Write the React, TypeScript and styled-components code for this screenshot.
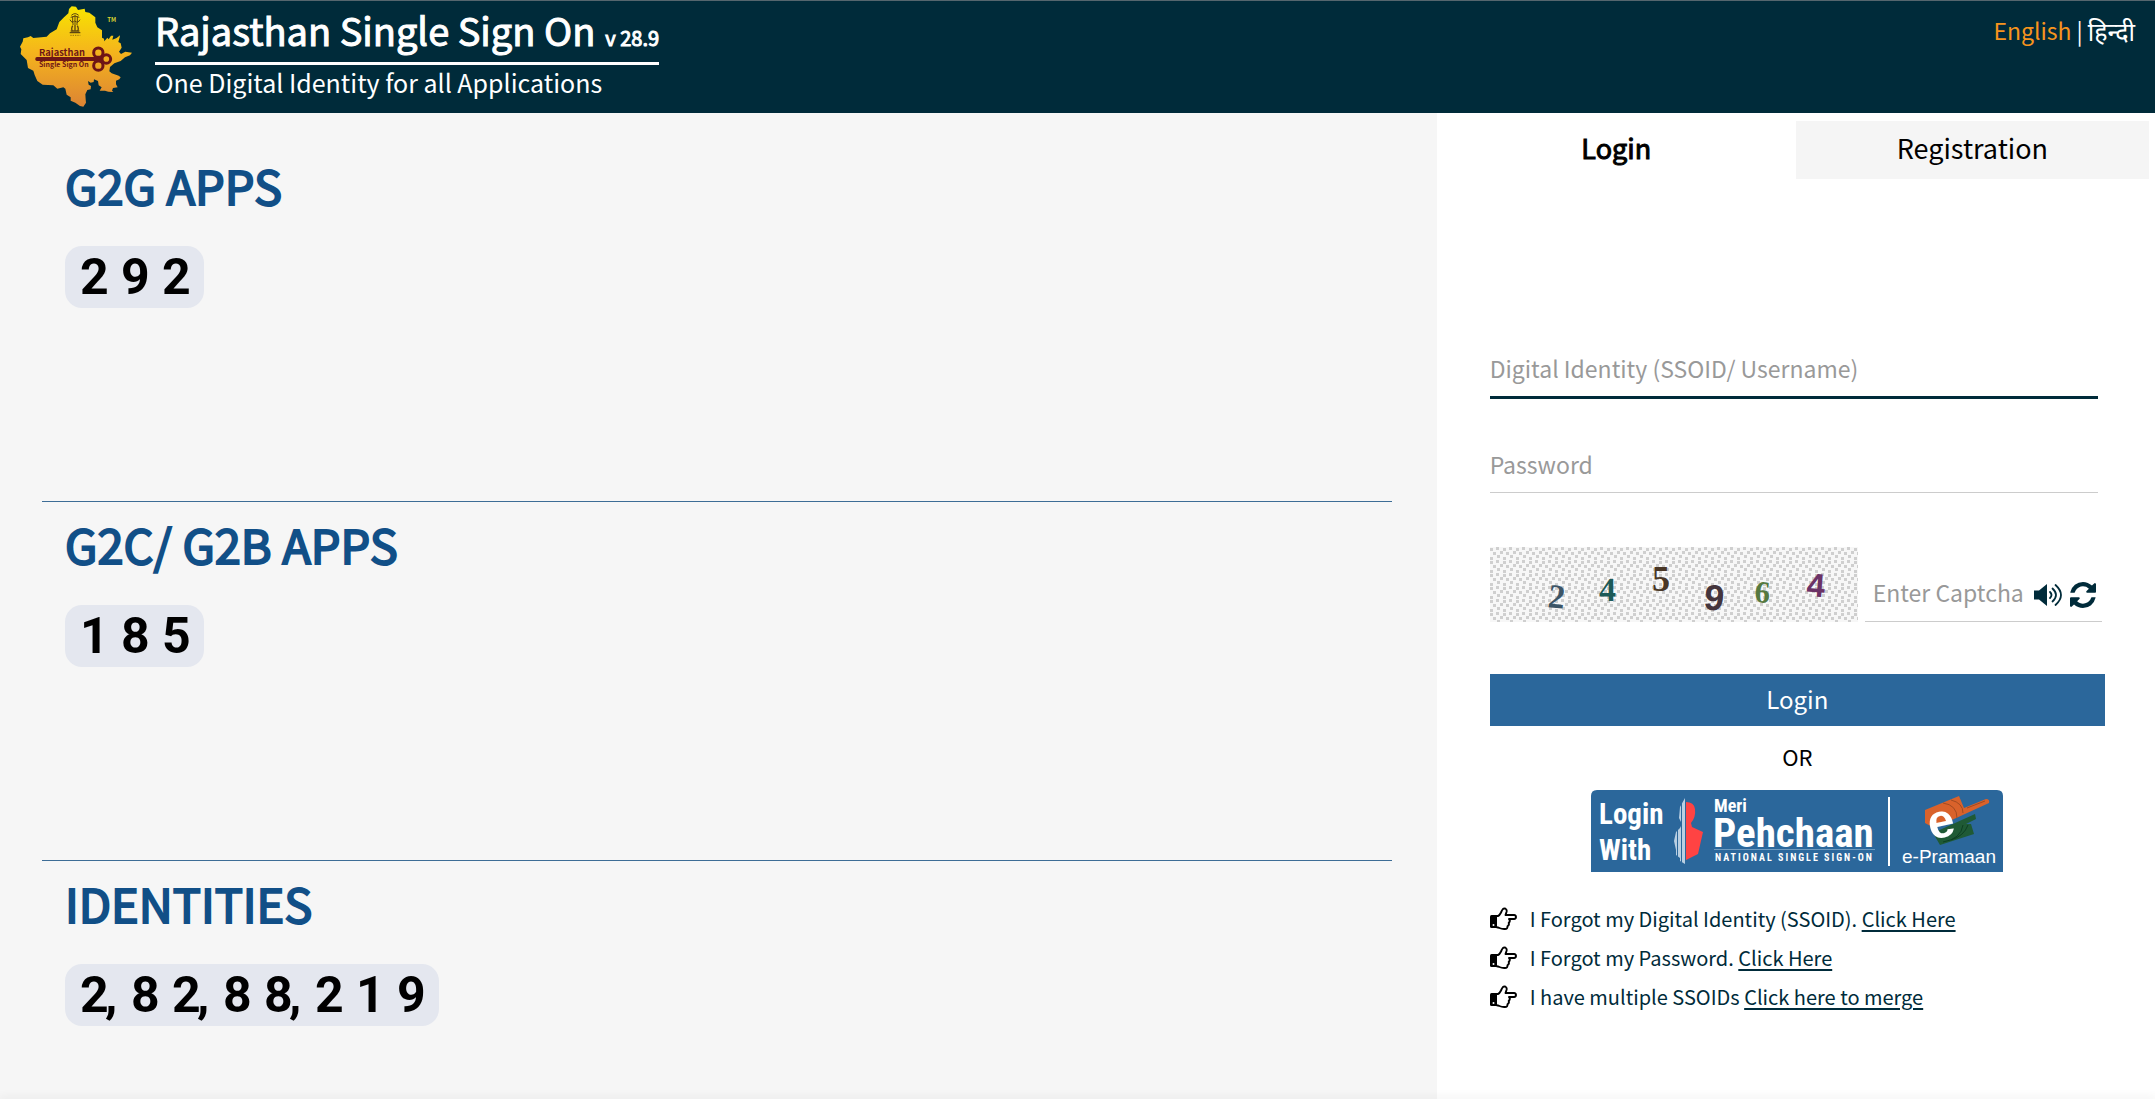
import React from "react";
import styled, { createGlobalStyle } from "styled-components";

const sans = `"Noto Sans CJK SC", "Noto Sans", sans-serif`;
const navy = "#002b3a";

const GlobalStyle = createGlobalStyle`
  *, *::before, *::after { box-sizing: border-box; }
  body { margin: 0; background: #fff; color: #000; font-family: ${sans}; }
  h1, h2, p, ul { margin: 0; padding: 0; font-weight: 400; }
  button, input { font-family: inherit; }
`;

const Page = styled.div`
  display: flex;
  flex-direction: column;
  min-height: 100vh;
`;

const Header = styled.header`
  display: flex;
  align-items: flex-start;
  gap: 20px;
  min-height: 113px;
  padding: 4px 20px 0 15px;
  background: ${navy};
  border-top: 1px solid #55666e;
  color: #fff;
`;

const Brand = styled.div`
  display: flex;
  flex-direction: column;
`;

const BrandTitle = styled.div`
  display: flex;
  align-items: baseline;
  gap: 10px;
  height: 60px;
  border-bottom: 3px solid #fff;
`;

const Title = styled.h1`
  font-size: 38px;
  line-height: 50px;
  -webkit-text-stroke: 1px currentColor;
`;

const Version = styled.span`
  font-size: 20px;
  line-height: 24px;
  -webkit-text-stroke: 1px currentColor;
`;

const Tagline = styled.p`
  font-size: 25px;
  line-height: 34px;
`;

const Languages = styled.nav`
  display: flex;
  gap: 5px;
  margin-left: auto;
  font-size: 23px;
  line-height: 50px;
`;

const Language = styled.a<{ $active?: boolean }>`
  color: ${(p) => (p.$active ? "#f7941d" : "#fff")};
  font-size: ${(p) => (p.$active ? 23 : 25)}px;
  text-decoration: none;
`;

const Main = styled.main`
  display: grid;
  grid-template-columns: 2fr 1fr;
  flex: 1;
`;

const Stats = styled.div`
  padding: 30px 45px 0 42px;
  background: #f6f6f6;
`;

const Stat = styled.section`
  min-height: 359px;
  padding: 12px 23px 0;
  border-bottom: 1px solid #3d6d96;

  &:last-child {
    min-height: 0;
    border-bottom: 0;
  }
`;

const StatTitle = styled.h2`
  margin-bottom: 31px;
  color: #114f87;
  font-size: 47px;
  line-height: 60px;
  -webkit-text-stroke: 2px currentColor;
`;

const Counter = styled.div`
  display: inline-flex;
  height: 62px;
  padding: 0 1px 0 15px;
  border-radius: 17px;
  background: #e4e7ef;
  font-family: Roboto, sans-serif;
  font-size: 50px;
  font-weight: 700;
  line-height: 62px;
`;

const Digit = styled.span<{ $beforeComma?: boolean }>`
  width: ${(p) => (p.$beforeComma ? 25 : 41)}px;
`;

const Comma = styled.span`
  width: 26px;
`;

const Panel = styled.div`
  background: #fff;
`;

const Tabs = styled.div`
  display: grid;
  grid-template-columns: 1fr 1fr;
  gap: 3px;
  padding: 8px 6px 0 3px;
`;

const Tab = styled.button<{ $active?: boolean }>`
  height: 58px;
  padding: 0 0 6px;
  border: 0;
  background: ${(p) => (p.$active ? "#fff" : "#f5f5f5")};
  color: #000;
  font-size: 27px;
  -webkit-text-stroke: ${(p) => (p.$active ? "1px currentColor" : "0")};
`;

const Form = styled.form`
  display: flex;
  flex-direction: column;
  padding: 167px 50px 0 53px;
`;

const Input = styled.input<{ $strong?: boolean }>`
  width: 100%;
  height: ${(p) => (p.$strong ? 53 : 51)}px;
  padding: 0 0 7px;
  border: 0;
  border-bottom: ${(p) => (p.$strong ? `3px solid ${navy}` : "1px solid #ccc")};
  outline: 0;
  background: transparent;
  color: #000;
  font-size: 23px;

  &::placeholder {
    color: #999;
    opacity: 1;
  }
`;

const Fields = styled.div`
  display: grid;
  gap: 43px;
  margin-right: 7px;
`;

const CaptchaRow = styled.div`
  display: flex;
  align-items: flex-end;
  gap: 7px;
  margin: 54px 3px 52px 0;
`;

const CaptchaEntry = styled.div`
  display: flex;
  flex: 1;
  align-items: center;
  gap: 7px;
  height: 51px;
  padding: 0 6px 2px 8px;
  border-bottom: 1px solid #ccc;
`;

const CaptchaInput = styled(Input)`
  flex: 1;
  width: 0;
  border-bottom: 0;
`;

const IconButton = styled.button`
  display: flex;
  padding: 0;
  border: 0;
  background: none;
  color: ${navy};
`;

const Submit = styled.button`
  height: 52px;
  padding: 0 0 4px;
  border: 0;
  background: #2b679b;
  color: #fff;
  font-size: 24px;
`;

const Or = styled.p`
  margin: 12px 0 16px;
  font-size: 22px;
  line-height: 36px;
  text-align: center;
`;

const BannerLink = styled.a`
  display: flex;
  align-self: center;
`;

const HelpList = styled.ul`
  margin-top: 27px;
  list-style: none;
`;

const HelpItem = styled.li`
  display: flex;
  align-items: center;
  gap: 12px;
  color: ${navy};
  font-size: 20px;
  line-height: 39px;
`;

const HelpLink = styled.a`
  color: inherit;
  text-underline-offset: 3px;
`;

const Footer = styled.footer`
  height: 0;
  box-shadow: 0 0 8px 1px rgba(0, 0, 0, 0.14);
`;

const Logo = () => (
  <svg width="120" height="106" viewBox="45 15 360 318" role="img" aria-label="Rajasthan Single Sign On">
    <defs>
      <linearGradient id="land" x1="0" y1="0" x2="0" y2="1">
        <stop offset="0" stopColor="#f7e400" />
        <stop offset="0.45" stopColor="#f5b51c" />
        <stop offset="1" stopColor="#dc8434" />
      </linearGradient>
    </defs>
    <path
      fill="url(#land)"
      d="M207 27L215 19 228 20 234 30 254 26 256 36 268 38 281 48 286 52 286 68 292 82 306 91 306 113 312 116 313 124 322 113 326 118 333 107 340 107 337 119 350 114 360 106 359 112 355 126 362 130 365 143 357 155 363 162 376 155 396 158 390 166 375 172 362 183 343 190 330 201 328 214 335 220 356 227 362 232 358 238 348 242 348 253 353 262 339 264 336 272 340 276 325 275 315 272 299 272 305 262 296 256 294 243 282 238 281 246 272 248 264 243 266 254 273 258 272 268 262 270 256 283 257 298 258 308 250 320 240 318 226 308 212 302 212 292 200 284 196 266 190 262 172 266 160 256 128 254 112 243 104 225 100 212 84 204 80 180 62 162 64 148 60 140 68 125 70 115 84 112 92 108 100 114 140 110 150 100 170 88 178 66 192 52 205 40z"
    />
    <g fill="none" stroke="#5f4710">
      <path strokeWidth="3" d="M214 46q11-10 22 0M212 52q13-7 26 0M210 59q5 12 14 4 10 8 16-4M218 49v20M225 45v24M232 49v20M216 72h18" />
      <path strokeWidth="4" d="M218 77q-6 12 0 15M232 77q6 12 0 15M225 75v17" />
      <path strokeWidth="4" d="M209 98h32M212 93h26" />
      <path strokeWidth="2" strokeDasharray="4 3" d="M211 106h30" />
    </g>
    <g fill="#6e1616" fontFamily="Noto Sans CJK SC, sans-serif">
      <text x="117" y="167" fontSize="28" fontWeight="700">Rajasthan</text>
      <text x="117" y="201" fontSize="21" fontWeight="700">Single Sign On</text>
      <rect x="106" y="171" width="184" height="12" rx="5" />
    </g>
    <g fill="none" stroke="#6e1616" strokeWidth="9">
      <circle cx="295" cy="158" r="14" />
      <circle cx="295" cy="197" r="14" />
      <circle cx="319" cy="177" r="13" />
      <path d="M282 177h22" />
    </g>
    <text x="322" y="67" fill="#d9d230" fontFamily="Noto Sans CJK SC, sans-serif" fontSize="18" fontWeight="700">TM</text>
  </svg>
);

const captchaGlyphs = [
  { char: "2", x: 57, y: 60, size: 34, fill: "#3d5566", serif: true, turn: 6 },
  { char: "4", x: 109, y: 54, size: 34, fill: "#1c5a58", serif: true, turn: 0 },
  { char: "5", x: 162, y: 44, size: 36, fill: "#4a3726", serif: true, turn: 0 },
  { char: "9", x: 213, y: 62, size: 36, fill: "#44353c", serif: false, turn: 6 },
  { char: "6", x: 264, y: 55, size: 31, fill: "#56793f", serif: true, turn: 4 },
  { char: "4", x: 316, y: 49, size: 33, fill: "#6b3266", serif: false, turn: 4 },
];

const CaptchaImage = () => (
  <svg width="368" height="75" viewBox="0 0 368 75" role="img" aria-label="Captcha">
    <defs>
      <pattern id="weave" width="13" height="13" patternUnits="userSpaceOnUse">
        <rect width="13" height="13" fill="#f7f7f7" />
        <g fill="#cfcfcf">
          <rect x="0" y="1" width="3" height="3" />
          <rect x="6" y="0" width="3" height="3" />
          <rect x="3" y="5" width="3" height="3" />
          <rect x="10" y="4" width="3" height="3" />
          <rect x="0" y="10" width="3" height="3" />
          <rect x="7" y="8" width="3" height="3" />
        </g>
      </pattern>
    </defs>
    <rect width="368" height="75" fill="url(#weave)" />
    {captchaGlyphs.map((g) => (
      <text
        key={g.x}
        x={g.x}
        y={g.y}
        fill={g.fill}
        fontFamily={g.serif ? "Liberation Serif, serif" : "Liberation Sans, sans-serif"}
        fontSize={g.size}
        fontWeight="700"
        transform={`rotate(${g.turn} ${g.x} ${g.y})`}
      >
        {g.char}
      </text>
    ))}
  </svg>
);

const SpeakerIcon = () => (
  <svg width="29" height="26" viewBox="0 0 29 26" aria-hidden="true">
    <path fill="currentColor" d="M0 8.500h5l8-6.500v22l-8-6.500H0z" />
    <g fill="none" stroke="currentColor" strokeWidth="1.800" strokeLinecap="round">
      <path d="M16 10q3 3 0 6M18.500 6.500q7 6.500 0 13M21.500 3q11 10 0 20" />
    </g>
  </svg>
);

const RefreshIcon = () => (
  <svg width="26" height="26" viewBox="128 128 1536 1536" aria-hidden="true">
    <path
      fill="currentColor"
      d="M1639 1056q0 5-1 7-64 268-268 434.500t-478 166.500q-146 0-282.500-55t-243.500-157l-129 129q-19 19-45 19t-45-19-19-45v-448q0-26 19-45t45-19h448q26 0 45 19t19 45-19 45l-137 137q71 66 161 102t187 36q134 0 250-65t186-179q11-17 53-117 8-23 30-23h192q13 0 22.500 9.500t9.500 22.500zm25-800v448q0 26-19 45t-45 19h-448q-26 0-45-19t-19-45 19-45l138-138q-148-137-349-137-134 0-250 65t-186 179q-11 17-53 117-8 23-30 23h-199q-13 0-22.500-9.500t-9.500-22.500v-7q65-268 270-434.500t480-166.500q146 0 284 55.500t245 156.500l130-129q19-19 45-19t45 19 19 45z"
    />
  </svg>
);

const HandIcon = () => (
  <svg width="28" height="24" viewBox="0 0 28 24" aria-hidden="true">
    <path fill="#000" d="M1.500 8h5.500v13H1.500q-1.500 0-1.500-1.500v-10Q0 8 1.500 8z" />
    <circle cx="3.500" cy="18" r="1" fill="#fff" />
    <path
      fill="none"
      stroke="#000"
      strokeWidth="1.900"
      strokeLinejoin="round"
      d="M6.500 9h1.500q1.500-.5 3-3.500 1-2.300 2-3.500 1-1 2.500-.3 1.700 1 1 3.300l-1 3H24q2 .2 2 2t-2 2h-5q1.800 2-.3 4 .8 2-1.200 3.200.2 2.800-2.500 2.800-3 .2-5.500-1-1.500-.8-3-.8"
    />
  </svg>
);

const narrow = `"Liberation Sans Narrow", "Roboto Condensed", "Open Sans Condensed", "Liberation Sans", sans-serif`;

const PehchaanBanner = () => (
  <svg width="412" height="82" viewBox="0 0 412 82" role="img" aria-label="Login with Meri Pehchaan, e-Pramaan">
    <path fill="#2b679b" d="M0 82V6q0-6 6-6h400q6 0 6 6v76z" />
    <g fill="#fff" fontFamily={narrow} fontWeight="700">
      <text x="8" y="34" fontSize="29">Login</text>
      <text x="8" y="70" fontSize="29">With</text>
      <text x="123" y="22" fontSize="18">Meri</text>
      <text x="122" y="57" fontSize="41">Pehchaan</text>
      <text x="124" y="71" fontSize="10" letterSpacing="2">NATIONAL SINGLE SIGN-ON</text>
    </g>
    <path fill="#6f9bc0" d="M123 59h161v1H123z" />
    <path fill="#b9cfe2" d="M94 8v66l-5-3v-3l-4-3v-5l-2-9 2-9 4-4 2-4-3-6 1-11 5-9z" />
    <path stroke="#2b679b" strokeWidth="1" d="M86.500 38v34M90.500 10v62" />
    <path fill="#ff4343" d="M95 12q8 0 9 7 1 8-4 14l1 4 11 5-5 22-12 6z" />
    <path fill="#fff" d="M297 7h2v69h-2z" />
    <path fill="#d9622b" d="M334 20l34-14 5 12 22-9q4 0 3 4l-35 16-20 9-9-5z" />
    <path fill="#1f5a35" d="M342 43l42-19 1 5-10 5 5 0 3 10-34 11z" />
    <path fill="none" stroke="#a24a20" d="M352 13q14 2 14 15M360 10q12 3 12 13M376 18l18-7" />
    <path fill="none" stroke="#0d3f22" d="M352 52q18-3 20-17M360 50q13-4 17-15" />
    <text x="340" y="50" fill="#fff" fontFamily="Liberation Sans, sans-serif" fontSize="48" fontWeight="700" transform="rotate(-12 340 50)">e</text>
    <text x="311" y="73" fill="#fff" fontFamily="Liberation Sans, sans-serif" fontSize="19">e-Pramaan</text>
  </svg>
);

const CounterValue = ({ value }: { value: string }) => (
  <Counter>
    {value.split("").map((char, i) =>
      char === "," ? (
        <Comma key={i}>,</Comma>
      ) : (
        <Digit key={i} $beforeComma={value[i + 1] === ","}>
          {char}
        </Digit>
      )
    )}
  </Counter>
);

const stats = [
  { title: "G2G APPS", value: "292" },
  { title: "G2C/ G2B APPS", value: "185" },
  { title: "IDENTITIES", value: "2,82,88,219" },
];

const helpLinks = [
  { text: "I Forgot my Digital Identity (SSOID). ", link: "Click Here" },
  { text: "I Forgot my Password. ", link: "Click Here" },
  { text: "I have multiple SSOIDs ", link: "Click here to merge" },
];

export default function App() {
  return (
    <Page>
      <GlobalStyle />
      <Header>
        <Logo />
        <Brand>
          <BrandTitle>
            <Title>Rajasthan Single Sign On</Title>
            <Version>v 28.9</Version>
          </BrandTitle>
          <Tagline>One Digital Identity for all Applications</Tagline>
        </Brand>
        <Languages>
          <Language href="#en" $active>English</Language>
          <span>|</span>
          <Language href="#hi" lang="hi">हिन्दी</Language>
        </Languages>
      </Header>
      <Main>
        <Stats>
          {stats.map((s) => (
            <Stat key={s.title}>
              <StatTitle>{s.title}</StatTitle>
              <CounterValue value={s.value} />
            </Stat>
          ))}
        </Stats>
        <Panel>
          <Tabs>
            <Tab type="button" $active>Login</Tab>
            <Tab type="button">Registration</Tab>
          </Tabs>
          <Form onSubmit={(e) => e.preventDefault()}>
            <Fields>
              <Input
                $strong
                aria-label="Digital Identity (SSOID/ Username)"
                placeholder="Digital Identity (SSOID/ Username)"
              />
              <Input type="password" aria-label="Password" placeholder="Password" />
            </Fields>
            <CaptchaRow>
              <CaptchaImage />
              <CaptchaEntry>
                <CaptchaInput aria-label="Enter Captcha" placeholder="Enter Captcha" />
                <IconButton type="button" aria-label="Play captcha">
                  <SpeakerIcon />
                </IconButton>
                <IconButton type="button" aria-label="Refresh captcha">
                  <RefreshIcon />
                </IconButton>
              </CaptchaEntry>
            </CaptchaRow>
            <Submit type="submit">Login</Submit>
            <Or>OR</Or>
            <BannerLink href="#pehchaan">
              <PehchaanBanner />
            </BannerLink>
            <HelpList>
              {helpLinks.map((h) => (
                <HelpItem key={h.text}>
                  <HandIcon />
                  <span>
                    {h.text}
                    <HelpLink href="#help">{h.link}</HelpLink>
                  </span>
                </HelpItem>
              ))}
            </HelpList>
          </Form>
        </Panel>
      </Main>
      <Footer />
    </Page>
  );
}
